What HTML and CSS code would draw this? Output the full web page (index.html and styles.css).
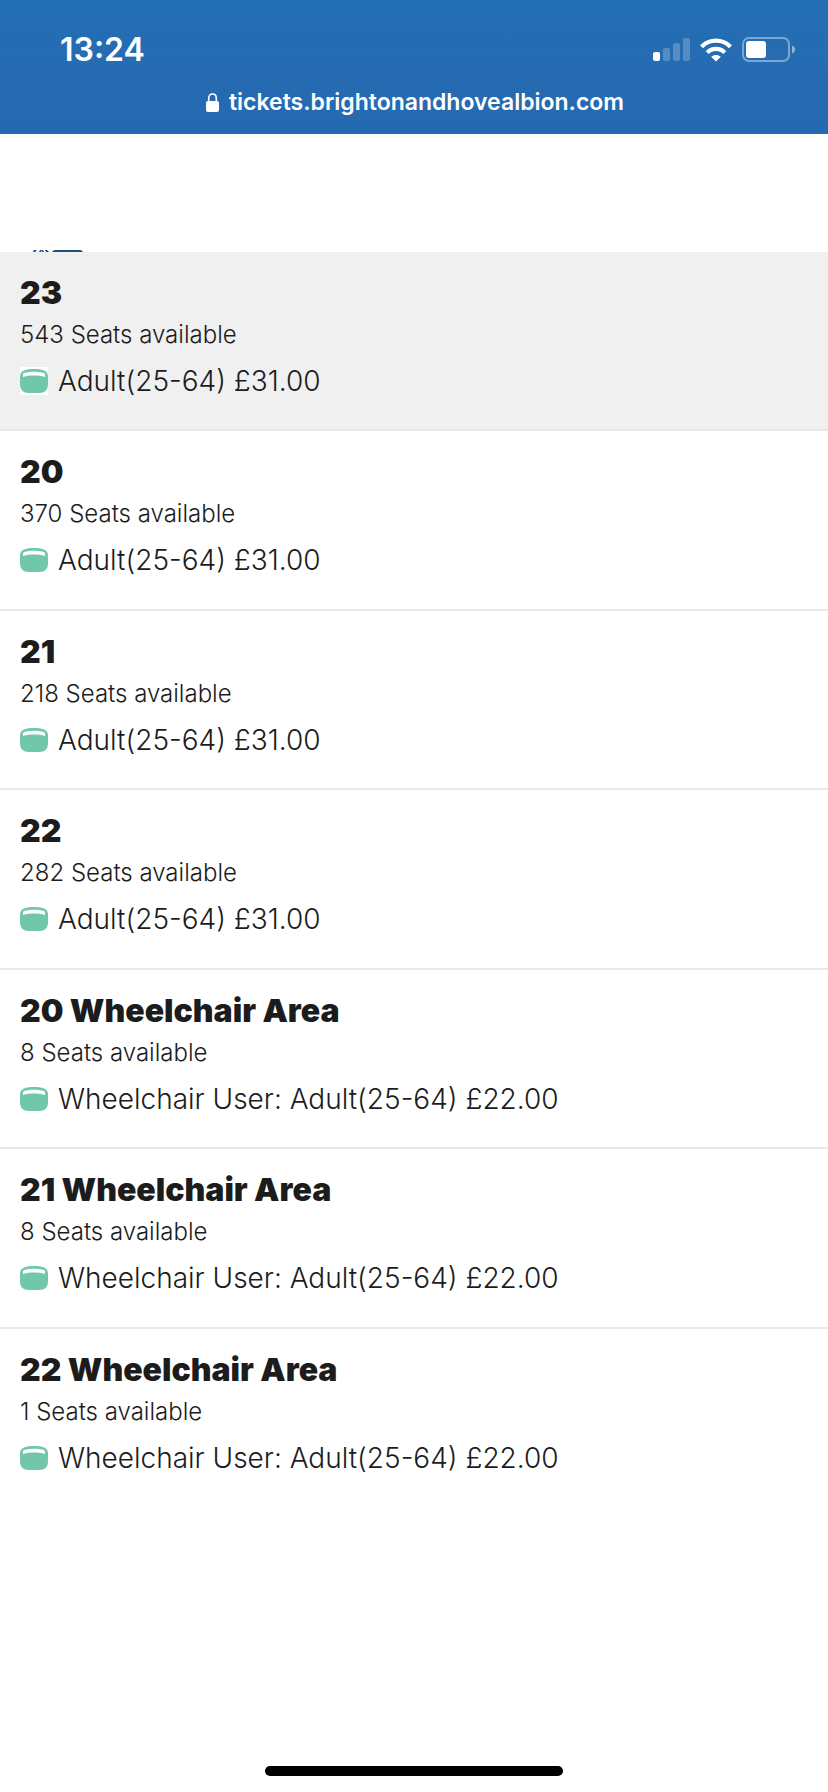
FILE: index.html
```html
<!DOCTYPE html>
<html lang="en">
<head>
<meta charset="utf-8">
<meta name="viewport" content="width=device-width, initial-scale=1">
<title>Brighton &amp; Hove Albion tickets</title>
<link rel="stylesheet" href="styles.css">
</head>
<body>
<svg class="symbols" aria-hidden="true">
  <symbol id="seat" viewBox="0 0 28 28">
    <path fill="#70c7ac" d="M14 2C9 2 5.500 2.600 3 4C1 5.200 0 7 0 10V17C0 23 3 26 9 26H19C25 26 28 23 28 17V10C28 7 27 5.200 25 4C22.500 2.600 19 2 14 2Z"/>
    <path fill="#fff" d="M3 10V7.200C3 5.800 8 4.800 14 4.800S25 5.800 25 7.200V10C21 8.900 18 8.600 14 8.600S7 8.900 3 10Z"/>
  </symbol>
</svg>
<header class="browser">
  <div class="status">
    <time class="clock">13:24</time>
    <div class="indicators">
      <svg width="37" height="24" viewBox="0 0 37 24" aria-label="Signal">
        <rect x="0" y="14" width="7" height="9" rx="2" fill="#fff"/>
        <g fill="#fff" opacity=".22">
          <rect x="10" y="10" width="7" height="13" rx="2"/>
          <rect x="20" y="5" width="7" height="18" rx="2"/>
          <rect x="30" y="0" width="7" height="23" rx="2"/>
        </g>
      </svg>
      <svg width="32" height="24" viewBox="0 0 32 24" aria-label="Wi-Fi">
        <g fill="none" stroke="#fff" stroke-width="4.200">
          <path d="M1.500 8.700C9.500 .600 22.500 .600 30.500 8.700"/>
          <path d="M7.200 14.600C12 9.600 20 9.600 24.800 14.600"/>
        </g>
        <path fill="#fff" d="M16 23.500L11.200 18.800C14 16.500 18 16.500 20.800 18.800Z"/>
      </svg>
      <svg width="54" height="26" viewBox="0 0 54 26" aria-label="Battery">
        <rect x="1" y="1" width="46" height="23" rx="6" fill="none" stroke="#fff" stroke-width="2" opacity=".4"/>
        <rect x="4" y="4" width="20" height="17" rx="3" fill="#fff"/>
        <path d="M50 8.500C54 10 54 15 50 16.500Z" fill="#fff" opacity=".5"/>
      </svg>
    </div>
  </div>
  <div class="address">
    <svg width="13" height="19" viewBox="0 0 13 19" aria-hidden="true">
      <rect x="0" y="8" width="13" height="11" rx="2" fill="#fff"/>
      <path d="M2.700 9V5.300C2.700-.400 10.300-.400 10.300 5.300V9" fill="none" stroke="#fff" stroke-width="1.600"/>
    </svg>
    <span>tickets.brightonandhovealbion.com</span>
  </div>
</header>
<main>
  <div class="masthead">
    <svg width="52" height="2" viewBox="0 0 52 2" aria-hidden="true">
      <g fill="#1f4e7c">
        <path d="M2 0H5L3 2H1Z"/>
        <path d="M8 0H10L9 2H7Z"/>
        <path d="M10 0H11L12 2H10Z"/>
        <path d="M13 0H15L17 2H14Z"/>
        <path d="M23 0H48Q50 0 51 2H20Q21 0 23 0Z"/>
      </g>
    </svg>
  </div>
  <ul class="areas">
    <li><button class="area area--active" type="button"><span class="name">23</span><span class="seats">543 Seats available</span><span class="price"><svg class="seat"><use href="#seat"/></svg>Adult(25-64) £31.00</span></button></li>
    <li><button class="area" type="button"><span class="name">20</span><span class="seats">370 Seats available</span><span class="price"><svg class="seat"><use href="#seat"/></svg>Adult(25-64) £31.00</span></button></li>
    <li><button class="area" type="button"><span class="name">21</span><span class="seats">218 Seats available</span><span class="price"><svg class="seat"><use href="#seat"/></svg>Adult(25-64) £31.00</span></button></li>
    <li><button class="area" type="button"><span class="name">22</span><span class="seats">282 Seats available</span><span class="price"><svg class="seat"><use href="#seat"/></svg>Adult(25-64) £31.00</span></button></li>
    <li><button class="area" type="button"><span class="name">20 Wheelchair Area</span><span class="seats">8 Seats available</span><span class="price"><svg class="seat"><use href="#seat"/></svg>Wheelchair User: Adult(25-64) £22.00</span></button></li>
    <li><button class="area" type="button"><span class="name">21 Wheelchair Area</span><span class="seats">8 Seats available</span><span class="price"><svg class="seat"><use href="#seat"/></svg>Wheelchair User: Adult(25-64) £22.00</span></button></li>
    <li><button class="area" type="button"><span class="name">22 Wheelchair Area</span><span class="seats">1 Seats available</span><span class="price"><svg class="seat"><use href="#seat"/></svg>Wheelchair User: Adult(25-64) £22.00</span></button></li>
  </ul>
</main>
<footer class="home"><div class="home-bar"></div></footer>
</body>
</html>
```
FILE: styles.css
```css
* {
  box-sizing: border-box;
}

body {
  margin: 0;
  min-height: 100vh;
  display: flex;
  flex-direction: column;
  background: #fff;
  color: #1c1c1c;
  font-family: Inter, "Liberation Sans", sans-serif;
}

svg {
  display: block;
  flex: none;
}

.symbols {
  position: absolute;
  width: 0;
  height: 0;
}

.browser {
  background: linear-gradient(#246fb4, #266bb2 60%, #246ab1);
  color: #fff;
  padding: 30px 32px 16px 60px;
}

.status {
  display: flex;
  align-items: center;
  justify-content: space-between;
  height: 40px;
}

.clock {
  font-size: 32px;
  font-weight: 600;
  line-height: 40px;
}

.indicators {
  display: flex;
  align-items: center;
  gap: 10px;
}

.address {
  display: flex;
  align-items: center;
  justify-content: center;
  gap: 10px;
  margin: 16px 0 0 -26px;
  font-size: 23px;
  font-weight: 600;
  line-height: 32px;
}

main {
  flex: 1;
}

.masthead {
  display: flex;
  align-items: flex-end;
  height: 118px;
  padding-left: 32px;
}

.areas {
  list-style: none;
  margin: 0;
  padding: 0;
}

.area {
  display: flex;
  flex-direction: column;
  width: 100%;
  padding: 23px 20px 30px;
  border: 0;
  border-bottom: 2px solid #e8e8e8;
  background: transparent;
  color: inherit;
  font-family: inherit;
  text-align: left;
}

li:nth-child(even) .area {
  padding-bottom: 31px;
}

li:last-child .area {
  border-bottom: 0;
}

.area--active {
  background: #f0f0f0;
}

.name {
  font-size: 32px;
  font-weight: 900;
  line-height: 36px;
}

.seats {
  margin-top: 8px;
  font-size: 24px;
  font-weight: 300;
  line-height: 32px;
}

.price {
  display: flex;
  align-items: center;
  gap: 10px;
  margin-top: 12px;
  font-size: 28px;
  font-weight: 300;
  line-height: 36px;
}

.seat {
  width: 28px;
  height: 28px;
  background: #fff;
}

.home {
  padding: 16px 0;
}

.home-bar {
  width: 36%;
  height: 10px;
  margin: 0 auto;
  border-radius: 5px;
  background: #000;
}
```
